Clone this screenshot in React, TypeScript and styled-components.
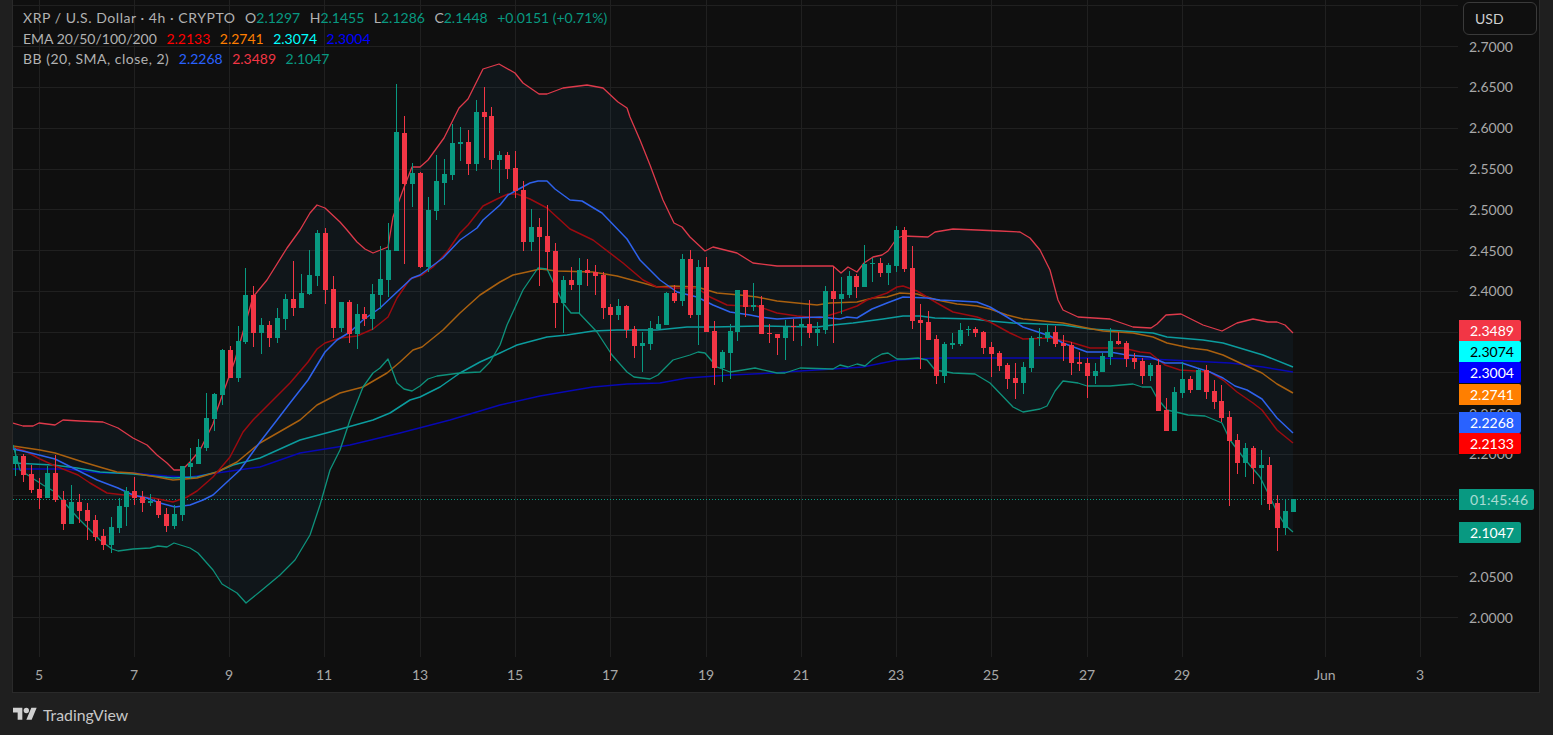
import styled, { createGlobalStyle } from "styled-components";

const GREEN = "#089981";
const RED = "#f23645";
const FONT = `"Lato", "Noto Sans", sans-serif`;

// top, bottom of body, high, low (all page px), 1 = up candle
const CANDLES: number[][] = [
  [456,464,448,476,1],[456,475,454,482,0],[474,490,465,493,0],[489,498,478,509,0],[473,498,466,498,1],
  [473,500,455,502,0],[500,524,491,530,0],[502,524,485,524,1],[502,511,494,523,0],[510,521,503,540,0],
  [520,537,515,541,0],[536,545,529,550,0],[527,545,517,553,1],[506,528,498,533,1],[491,507,487,526,1],
  [491,498,477,505,0],[497,503,491,512,0],[501,503,494,506,1],[501,515,499,518,0],[514,526,508,532,0],
  [514,526,505,529,1],[466,515,466,521,1],[463,467,448,479,1],[447,464,439,464,1],[418,448,393,451,1],
  [394,419,393,431,1],[350,395,349,405,1],[350,378,346,378,0],[341,378,326,382,1],[295,342,268,344,1],
  [295,333,286,347,0],[325,333,318,354,1],[325,338,321,347,0],[318,338,308,343,1],[299,319,294,330,1],
  [299,308,261,316,0],[293,308,274,308,1],[275,294,250,295,1],[233,276,230,286,1],[233,290,228,304,0],
  [289,328,276,338,0],[302,328,302,332,1],[302,334,300,343,0],[314,334,304,349,1],[314,319,307,326,0],
  [294,319,284,330,1],[279,295,246,309,1],[250,280,223,297,1],[132,251,84,251,1],[133,184,116,264,0],
  [173,184,163,207,1],[173,267,172,268,0],[210,267,197,272,1],[181,211,155,220,1],[174,183,159,205,1],
  [143,175,124,180,1],[142,144,127,161,1],[142,164,130,175,0],[112,164,100,171,1],[112,117,87,158,0],
  [116,160,107,169,0],[155,160,151,193,1],[155,169,152,179,0],[168,191,151,198,0],[190,242,181,251,0],
  [227,242,209,251,1],[227,237,218,286,0],[236,252,205,270,0],[251,303,243,328,0],[280,303,276,333,1],
  [280,285,267,290,0],[270,285,258,314,1],[270,273,259,286,0],[272,276,265,295,0],[275,308,272,319,0],
  [307,315,304,361,0],[306,315,299,320,1],[306,330,305,338,0],[329,346,326,358,0],[343,346,332,372,1],
  [328,344,321,350,1],[324,329,316,329,1],[293,325,292,325,1],[293,301,285,303,0],[259,301,254,306,1],
  [259,315,250,318,0],[267,315,260,345,1],[267,332,257,332,0],[331,368,321,385,0],[352,368,350,382,1],
  [331,353,324,379,1],[290,332,290,341,1],[290,307,290,317,0],[305,307,283,311,1],[305,334,296,334,0],
  [333,334,324,343,0],[334,338,334,355,0],[327,338,320,360,1],[326,327,319,341,0],[324,327,318,346,1],
  [324,333,300,338,0],[329,333,322,346,1],[291,330,286,334,1],[291,299,266,343,0],[294,299,277,314,1],
  [276,295,271,298,1],[276,287,274,298,0],[264,287,245,287,1],[263,264,258,282,1],[263,273,258,277,0],
  [265,273,263,285,1],[230,266,226,272,1],[230,269,227,272,0],[268,321,246,329,0],[320,323,304,369,0],
  [322,340,311,340,0],[339,376,335,384,0],[344,376,342,383,1],[343,345,333,349,1],[330,344,323,346,1],
  [329,330,326,336,1],[329,333,327,337,0],[332,348,331,354,0],[347,354,342,377,0],[353,366,351,371,0],
  [365,379,363,389,0],[378,383,363,399,0],[367,383,362,394,1],[338,368,336,372,1],[337,338,328,346,1],
  [332,338,324,342,1],[332,344,326,347,0],[343,346,335,361,0],[345,363,342,375,0],[362,364,352,371,0],
  [363,376,358,398,0],[371,376,363,384,1],[356,372,353,372,1],[341,357,328,365,1],[341,344,332,345,0],
  [343,359,341,367,0],[358,362,353,369,0],[361,376,358,384,0],[365,376,363,381,1],[365,411,359,411,0],
  [410,431,398,431,0],[392,431,387,431,1],[379,393,362,398,1],[379,390,376,393,0],[370,390,369,390,1],
  [370,392,365,399,0],[391,402,380,409,0],[401,418,385,422,0],[417,441,411,506,0],[440,463,434,474,0],
  [448,463,443,477,1],[448,468,446,484,0],[465,468,450,505,1],[465,504,457,510,0],[503,528,495,551,0],
  [511,528,499,535,1],[499,512,499,512,1],
];

const BB_UPPER = "13,423 23,426 33,426 39,423 55,425 63,420 80,421 103,422 118,428 133,438 147,445 157,455 167,463 174,470 182,470 190,462 200,450 213,424 217,410 235,360 253,297 267,280 287,248 300,230 310,213 317,205 325,208 340,222 347,230 357,242 365,249 373,253 388,247 393,217 403,190 412,167 420,167 428,160 444,138 459,108 468,99 476,83 483,69 499,64 515,73 523,83 539,94 547,94 563,88 587,85 603,88 618,102 627,108 630,117 640,140 650,165 663,200 674,223 682,227 690,237 705,251 713,247 737,253 753,263 777,266 833,266 841,273 848,267 857,272 864,263 873,257 882,255 888,251 897,238 903,236 928,237 935,232 953,229 977,230 1000,231 1020,232 1030,238 1040,250 1050,270 1058,300 1063,310 1078,317 1110,319 1133,327 1151,328 1157,324 1166,315 1181,314 1203,325 1222,331 1237,323 1253,319 1268,322 1277,322 1285,325 1293,333";
const BB_LOWER = "13,445 20,470 43,485 55,492 77,517 100,540 112,549 118,551 133,549 150,548 158,546 167,547 174,543 190,548 198,553 213,570 222,584 237,593 246,603 262,590 280,575 295,560 310,535 320,505 330,470 340,450 350,420 363,387 373,373 380,368 388,359 397,383 404,389 412,391 420,386 428,379 437,376 460,373 480,372 490,362 500,345 507,325 523,290 538,268 547,269 563,303 571,313 579,313 597,332 612,355 627,372 634,377 650,379 658,375 673,360 690,355 698,352 705,353 717,367 730,372 743,370 755,368 777,373 785,373 800,368 833,369 840,365 848,367 857,364 865,366 873,359 882,354 888,353 897,359 905,359 918,358 927,360 935,370 953,373 975,374 990,383 1013,407 1023,412 1040,409 1047,406 1055,391 1063,381 1078,383 1087,386 1110,386 1133,384 1142,387 1151,387 1157,398 1167,410 1180,413 1188,415 1205,416 1222,423 1230,440 1243,457 1260,477 1270,497 1277,512 1285,525 1293,532";
const BB_BASIS = "13,449 27,452 39,455 55,459 77,470 97,480 118,488 133,495 147,498 160,503 175,507 190,505 203,500 213,495 227,482 240,470 260,442 277,420 290,403 308,380 325,352 337,340 350,332 363,320 380,308 397,292 412,278 420,275 443,258 460,240 477,228 483,220 500,205 508,195 517,190 530,183 538,181 547,181 555,189 570,200 582,201 602,213 627,239 640,260 660,280 677,292 697,297 713,305 730,312 750,315 760,317 777,319 793,318 820,317 840,319 847,317 857,318 872,309 887,303 903,297 927,298 940,300 977,302 990,307 1007,317 1023,327 1050,336 1063,343 1087,352 1110,352 1127,355 1150,357 1165,363 1182,363 1197,368 1210,372 1223,378 1235,386 1247,390 1262,399 1277,418 1293,433";
const EMA20 = "13,447 25,451 40,459 53,465 78,475 90,483 107,493 133,496 153,498 173,502 187,497 197,491 213,477 230,457 243,432 253,420 270,403 290,383 308,362 317,349 325,343 340,338 357,336 373,329 388,317 397,298 410,279 422,275 433,267 447,252 460,233 468,225 483,206 497,199 508,194 517,194 530,199 547,208 570,229 593,240 623,263 643,280 657,287 673,288 697,288 710,297 727,305 743,306 757,306 777,313 797,316 820,318 840,312 857,306 867,300 887,293 897,287 903,286 917,291 937,303 953,312 977,317 990,322 1010,333 1023,339 1050,338 1070,342 1090,348 1123,348 1140,352 1150,353 1165,365 1180,370 1210,372 1223,380 1237,392 1253,403 1262,410 1277,430 1293,443";
const EMA50 = "13,446 40,450 55,453 83,462 103,468 117,472 133,473 157,477 173,480 197,478 217,472 237,462 260,443 300,420 317,405 340,393 363,387 387,373 400,362 413,350 422,347 443,330 460,313 480,295 500,282 513,275 527,272 540,269 557,271 593,272 617,276 643,283 657,287 673,286 697,287 717,293 740,295 757,297 777,301 817,305 830,303 857,302 873,298 887,297 900,293 917,294 937,300 957,304 977,306 990,309 1007,315 1023,319 1063,323 1087,328 1103,331 1133,333 1153,337 1167,343 1190,348 1207,350 1223,355 1240,363 1262,373 1277,384 1293,393";
const EMA100 = "13,463 53,465 77,468 100,472 133,474 173,478 197,477 217,472 233,465 260,458 300,440 330,432 373,420 390,413 410,400 420,397 440,387 460,373 480,362 500,353 517,345 547,337 567,335 593,331 617,330 657,330 687,327 713,327 760,326 817,327 833,325 853,323 883,319 903,316 920,316 935,318 973,319 990,321 1013,323 1063,325 1090,329 1123,331 1153,333 1167,337 1203,340 1223,343 1263,355 1293,367";
const EMA200 = "13,469 33,469 67,469 100,473 133,473 167,476 190,477 217,473 260,467 300,453 350,445 400,433 450,420 500,405 540,396 575,390 593,387 627,384 660,383 687,378 730,375 773,373 800,371 833,369 863,367 897,360 917,359 937,358 1090,358 1150,359 1190,361 1230,363 1263,367 1293,372";

const LINES = [
  { points: EMA200, color: "#0808b4", width: 1.5 },
  { points: EMA100, color: "#0c9c9e", width: 1.5 },
  { points: EMA50, color: "#a9600f", width: 1.5 },
  { points: EMA20, color: "#9c0b10", width: 1.5 },
  { points: BB_UPPER, color: "#de3a4b", width: 1.3 },
  { points: BB_LOWER, color: "#0e927c", width: 1.3 },
  { points: BB_BASIS, color: "#2e62ec", width: 1.5 },
];

const TICKS = [
  { x: 39, label: "5" }, { x: 134, label: "7" }, { x: 229, label: "9" }, { x: 324, label: "11" },
  { x: 420, label: "13" }, { x: 515, label: "15" }, { x: 610, label: "17" }, { x: 706, label: "19" },
  { x: 801, label: "21" }, { x: 896, label: "23" }, { x: 991, label: "25" }, { x: 1087, label: "27" },
  { x: 1182, label: "29" }, { x: 1325, label: "Jun" }, { x: 1420, label: "3" },
];

// blank rows sit fully behind a price tag
const PRICES = ["2.7000", "2.6500", "2.6000", "2.5500", "2.5000", "2.4500", "2.4000", "", "",
  "2.2500", "2.2000", "", "", "2.0500", "2.0000"];

const TAGS = [
  { y: 320, bg: RED, fg: "#fff", text: "2.3489" },
  { y: 341, bg: "#00ffff", fg: "#000", text: "2.3074" },
  { y: 362, bg: "#0000ff", fg: "#fff", text: "2.3004" },
  { y: 384, bg: "#ff7f00", fg: "#fff", text: "2.2741" },
  { y: 412, bg: "#2962ff", fg: "#fff", text: "2.2268" },
  { y: 433, bg: "#ff0000", fg: "#fff", text: "2.2133" },
  { y: 522, bg: GREEN, fg: "#fff", text: "2.1047" },
];

const GlobalStyle = createGlobalStyle`
  html, body { margin: 0; padding: 0; background: #1f1f1f; overflow: hidden; }
  * { box-sizing: border-box; }
`;

const Page = styled.div`
  width: 1553px;
  height: 735px;
  padding: 0 13px 0 12px;
  background: #1f1f1f;
  font-family: ${FONT};
  display: flex;
  flex-direction: column;
`;

const Pane = styled.div`
  height: 693px;
  background: #0f0f0f;
  border: 1px solid #2a2a2a;
  border-top: none;
  display: flex;
  flex-direction: column;
`;

const Main = styled.div`
  height: 657px;
  display: flex;
`;

const Plot = styled.div`
  position: relative;
  width: 1445px;
  height: 657px;
  svg { display: block; }
`;

const Legend = styled.div`
  position: absolute;
  left: 10px;
  top: 8px;
  display: flex;
  flex-direction: column;
  font-size: 14px;
  line-height: 20.5px;
  color: #b2b2b2;
`;

const LegendRow = styled.div`
  display: flex;
  gap: 9.5px;
  white-space: nowrap;
`;

const LegendTitle = styled.span<{ $track?: number }>`
  letter-spacing: ${(p) => p.$track ?? 0}px;
`;

const LegendItem = styled.span<{ $color?: string }>`
  color: ${(p) => p.$color ?? "#b2b2b2"};
`;

const PriceScale = styled.div`
  position: relative;
  width: 81px;
  padding-top: 26.6px;
  display: flex;
  flex-direction: column;
  overflow: hidden;
`;

const PriceLabel = styled.div`
  height: 40.786px;
  flex: none;
  padding-left: 11px;
  font-size: 14px;
  line-height: 40.786px;
  color: #a8a8a8;
`;

const UnitButton = styled.div`
  position: absolute;
  top: 2px;
  left: 5px;
  width: 74px;
  height: 33px;
  padding-left: 11px;
  border: 1px solid #3a3a3a;
  border-radius: 6px;
  background: #0f0f0f;
  font-size: 14px;
  line-height: 31px;
  color: #d0d0d0;
`;

const Tag = styled.div<{ $y: number; $bg: string; $fg: string; $wide?: boolean }>`
  position: absolute;
  top: ${(p) => p.$y}px;
  left: 1px;
  width: ${(p) => (p.$wide ? 75 : 62)}px;
  height: 21px;
  padding-left: 11px;
  border-radius: 0 2px 2px 0;
  background: ${(p) => p.$bg};
  color: ${(p) => p.$fg};
  font-size: 14px;
  line-height: 21px;
`;

const Countdown = styled.span`
  opacity: 0.65;
  letter-spacing: 0.35px;
`;

const TimeScale = styled.div`
  height: 35px;
  display: flex;
  padding-top: 9px;
`;

const TimeTick = styled.span<{ $offset: number }>`
  width: 0;
  margin-left: ${(p) => p.$offset}px;
  display: flex;
  justify-content: center;
  font-size: 14px;
  line-height: 17px;
  color: #a8a8a8;
`;

const Footer = styled.div`
  flex: 1;
  display: flex;
  align-items: center;
  gap: 6px;
  padding-left: 1px;
  font-size: 15.8px;
  color: #c8c8c8;
`;

const Chart = () => (
  <svg width={1445} height={657} viewBox="13 0 1445 657">
    {Array.from({ length: 16 }, (_, i) => {
      const y = Math.floor(5.95 + i * 40.77) + 0.5;
      return <line key={i} x1={13} x2={1458} y1={y} y2={y} stroke="#202020" />;
    })}
    {TICKS.map((t) => (
      <line key={t.x} x1={t.x + 0.5} x2={t.x + 0.5} y1={0} y2={657} stroke="#202020" />
    ))}
    <polygon points={`${BB_UPPER} ${BB_LOWER.split(" ").reverse().join(" ")}`} fill="#2196f3" fillOpacity={0.05} />
    <line x1={13} x2={1458} y1={499.5} y2={499.5} stroke={GREEN} strokeDasharray="1 2" />
    {LINES.map((l) => (
      <polyline key={l.color} points={l.points} fill="none" stroke={l.color} strokeWidth={l.width} strokeLinejoin="round" />
    ))}
    <g shapeRendering="crispEdges">
      {CANDLES.map(([top, bottom, high, low, up], i) => {
        const x = Math.floor(15.85 + 7.935 * i);
        return (
          <g key={i} fill={up ? GREEN : RED}>
            <rect x={x} y={high} width={1} height={low - high} />
            <rect x={x - 2} y={top} width={5} height={bottom - top} />
          </g>
        );
      })}
    </g>
  </svg>
);

export default function App() {
  return (
    <>
      <GlobalStyle />
      <Page>
        <Pane>
          <Main>
            <Plot>
              <Chart />
              <Legend>
                <LegendRow>
                  <LegendTitle $track={0.55}>XRP / U.S. Dollar · 4h · CRYPTO</LegendTitle>
                  <LegendItem>O<LegendItem $color={GREEN}>2.1297</LegendItem></LegendItem>
                  <LegendItem>H<LegendItem $color={GREEN}>2.1455</LegendItem></LegendItem>
                  <LegendItem>L<LegendItem $color={GREEN}>2.1286</LegendItem></LegendItem>
                  <LegendItem>C<LegendItem $color={GREEN}>2.1448</LegendItem></LegendItem>
                  <LegendItem $color={GREEN}>+0.0151 (+0.71%)</LegendItem>
                </LegendRow>
                <LegendRow>
                  <LegendTitle>EMA 20/50/100/200</LegendTitle>
                  <LegendItem $color="#ff0000">2.2133</LegendItem>
                  <LegendItem $color="#ff7f00">2.2741</LegendItem>
                  <LegendItem $color="#00ffff">2.3074</LegendItem>
                  <LegendItem $color="#0000ff">2.3004</LegendItem>
                </LegendRow>
                <LegendRow>
                  <LegendTitle $track={0.5}>BB (20, SMA, close, 2)</LegendTitle>
                  <LegendItem $color="#2962ff">2.2268</LegendItem>
                  <LegendItem $color={RED}>2.3489</LegendItem>
                  <LegendItem $color={GREEN}>2.1047</LegendItem>
                </LegendRow>
              </Legend>
            </Plot>
            <PriceScale>
              {PRICES.map((p, i) => (
                <PriceLabel key={i}>{p}</PriceLabel>
              ))}
              <UnitButton>USD</UnitButton>
              {TAGS.map((t) => (
                <Tag key={t.text} $y={t.y} $bg={t.bg} $fg={t.fg}>{t.text}</Tag>
              ))}
              <Tag $y={489} $bg={GREEN} $fg="#fff" $wide>
                <Countdown>01:45:46</Countdown>
              </Tag>
            </PriceScale>
          </Main>
          <TimeScale>
            {TICKS.map((t, i) => (
              <TimeTick key={t.x} $offset={t.x - (i ? TICKS[i - 1].x : 13)}>{t.label}</TimeTick>
            ))}
          </TimeScale>
        </Pane>
        <Footer>
          <svg width={24} height={19} viewBox="0 0 36 28" fill="#d0d0d0">
            <path d="M14 22H7V11H0V4h14v18zM28 22h-8l7.5-18h8L28 22z" />
            <circle cx="20" cy="8" r="4" />
          </svg>
          <span>TradingView</span>
        </Footer>
      </Page>
    </>
  );
}
